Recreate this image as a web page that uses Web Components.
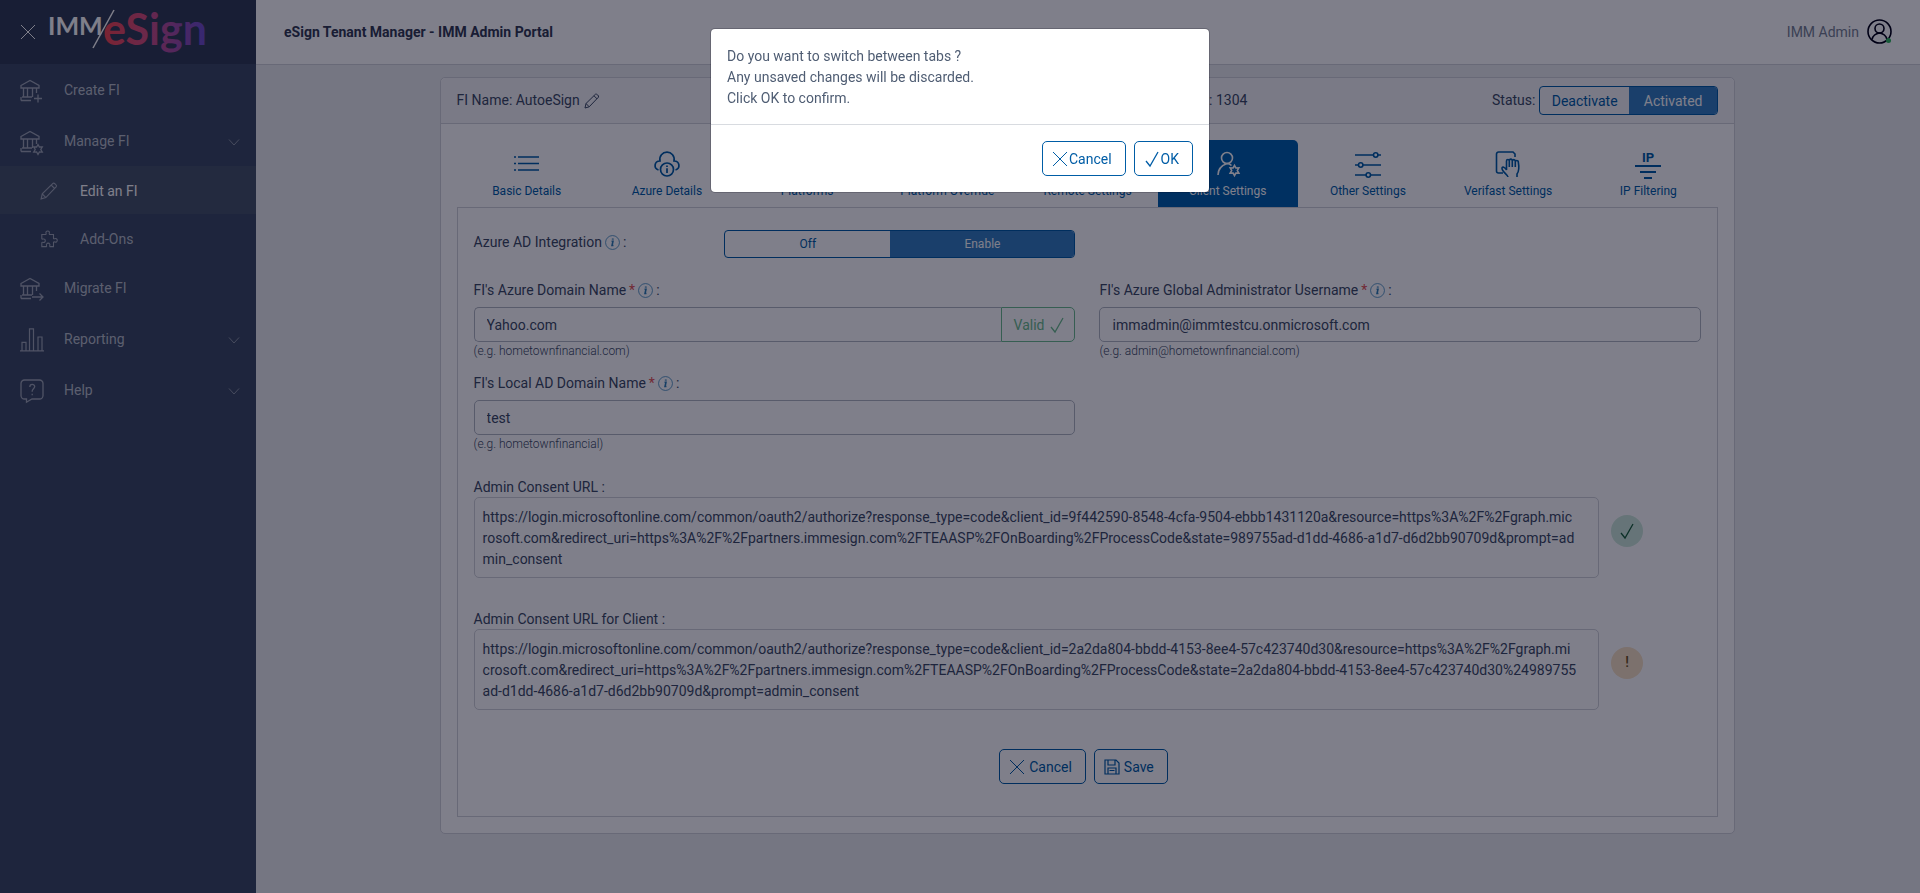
<!DOCTYPE html>
<html lang="en">
<head>
<meta charset="utf-8">
<title>eSign Tenant Manager - IMM Admin Portal</title>
<style>
    body {
        margin: 0;
        background: #ebedef;
        color: #3c4b64;
        font: 14px/21px Roboto, "Liberation Sans", sans-serif;
        --primary: #005da6;
        --primary-soft: #347ec1;
        --success: #6cbd8e;
        --line: #d0d2d8;
    }
</style>
</head>
<body>

<admin-app>
    <app-sidebar slot="sidebar">
        <nav-item icon="bank-plus">Create FI</nav-item>
        <nav-item icon="bank-gear" expandable>Manage FI</nav-item>
        <nav-item icon="pencil" sub active>Edit an FI</nav-item>
        <nav-item icon="puzzle" sub>Add-Ons</nav-item>
        <nav-item icon="bank-arrow">Migrate FI</nav-item>
        <nav-item icon="chart" expandable>Reporting</nav-item>
        <nav-item icon="help" expandable>Help</nav-item>
    </app-sidebar>
    <app-header slot="header" user="IMM Admin">eSign Tenant Manager - IMM Admin Portal</app-header>

    <fi-card name="AutoeSign" fi-id="1304">
        <tab-bar slot="tabs">
            <tab-item icon="list">Basic Details</tab-item>
            <tab-item icon="cloud-info">Azure Details</tab-item>
            <tab-item icon="list">Platforms</tab-item>
            <tab-item icon="list">Platform Override</tab-item>
            <tab-item icon="sliders">Remote Settings</tab-item>
            <tab-item icon="user-gear" active>Client Settings</tab-item>
            <tab-item icon="sliders">Other Settings</tab-item>
            <tab-item icon="hand">Verifast Settings</tab-item>
            <tab-item icon="ip">IP Filtering</tab-item>
        </tab-bar>
        <client-settings></client-settings>
    </fi-card>
</admin-app>

<confirm-dialog>
    Do you want to switch between tabs ?<br>
    Any unsaved changes will be discarded.<br>
    Click OK to confirm.
</confirm-dialog>

<script>
    const BANK = `<path d="M1 6.500 10 1.500l9 5v2.500H1zM3.500 9v9M7.500 9v9M12.500 9v9M16.500 9v5M2 18h10M1 21.500h10M1 18v3.500"/>`;
    const COG = `<path d="M19.500 14.500l1.400 2.500 2.900-.1-1.500 2.600 1.500 2.600-2.900-.1-1.400 2.500-1.400-2.500-2.900.1 1.500-2.600-1.500-2.600 2.900.1z"/>`;

    // name: [viewBox, stroke width, markup]
    const ICONS = {
        "close": ["0 0 16 16", 1, `<path d="M1 1l14 14M15 1L1 15"/>`],
        "check": ["0 0 16 16", 1.3, `<path d="M2 10l4 5L14 1"/>`],
        "chevron": ["0 0 12 12", 1, `<path d="M1 3.500l5 5.500 5-5.500"/>`],
        "info": ["0 0 16 16", .8, `<circle cx="8" cy="8" r="7.400"/><path stroke-width="1.700" d="M7 6.700h1.500l-1 4.500H9"/><path stroke-width="2" d="M8.300 3.700l-.1 1.300"/>`],
        "bank-plus": ["0 0 24 24", 1.3, BANK + `<path d="M18 15.500v8M14 19.500h8"/>`],
        "bank-gear": ["0 0 24 24", 1.3, BANK + `<g transform="translate(-1.500)">${COG}</g>`],
        "bank-arrow": ["0 0 24 24", 1.3, BANK + `<path d="M12 20h11M19.500 16.500L23 20l-3.500 3.500"/>`],
        "pencil": ["0 0 16 16", 1, `<path d="M1 15l1-4.500L11.500 1.200c.8-.8 3.900 1.700 3 2.900L5.200 13.800zM10 2.800l3.200 3.200M2 10.500l3.200 3.300"/>`],
        "puzzle": ["0 0 20 20", 1.2, `<path d="M2 5h4.500c1-.8-.5-1.800.3-3 .8-1.200 2.800-1.200 3.500 0 .7 1.200-.8 2.200.3 3H15v4.500c.9 1 1.900-.6 3.200.2 1.300.8 1.300 2.800 0 3.600-1.300.7-2.300-.8-3.200.2V18.500h-4c-.9-.9.6-1.900-.2-3-.8-1.200-2.700-1.200-3.500 0-.8 1.100.7 2.100-.2 3H2V14c.9-1 1.900.4 3-.4 1.200-.8 1.200-2.600 0-3.400-1.100-.8-2.100.6-3-.4z"/>`],
        "chart": ["0 0 24 24", 1.2, `<path d="M0 22.800h24M2 22.800v-8.500h4v8.500M9.500 22.800V.8h4v22M18 22.800V9h4v13.800"/>`],
        "help": ["0 0 24 24", 1.3, `<path d="M4.500 1h15A3.500 3.500 0 0 1 23 4.500v12a3.500 3.500 0 0 1-3.500 3.500H12l-5.500 3.200V20h-2A3.500 3.500 0 0 1 1 16.500v-12A3.500 3.500 0 0 1 4.500 1z"/><path d="M9.800 8c0-3.600 4.900-3.400 4.900-.4 0 2-2.500 2.200-2.500 4.400v.8M12.200 14.800v1.500"/>`],
        "list": ["0 0 26 26", 1.6, `<path d="M4 6H25M4 12.500H25M4 19H25M0 6h2M0 12.500h2M0 19h2"/>`],
        "cloud-info": ["0 0 26 26", 1.7, `<path d="M4.500 19C-.5 17.500 0 10 6 10 5 5 8.500 1.200 13 1.200S21 5 20 10c6 0 6.500 7.500 1.500 9"/><circle cx="13" cy="18.500" r="6.500"/><path d="M13 17.200V22M13 14.500v1.600"/>`],
        "user-gear": ["0 0 26 26", 1.6, `<circle cx="12" cy="7" r="5.500"/><path d="M3 24c0-6 3.500-9.500 9-11.500 2 0 3.500 1 4.500 2"/>` + COG],
        "sliders": ["0 0 26 26", 1.6, `<path d="M0 4h18.500M23 4h3M0 14h3.500M8 14h18M0 24h11M15.500 24H26"/><circle cx="20.700" cy="4" r="2.200"/><circle cx="5.700" cy="14" r="2.200"/><circle cx="13.300" cy="24" r="2.200"/>`],
        "hand": ["0 0 26 26", 1.6, `<path d="M8 22H3.500A2 2 0 0 1 1.500 20V3A2 2 0 0 1 3.500 1h14.500l2 2v3"/><path d="M13 26c0-2-6-5.500-6-8.500 0-2.500 3-1.500 4.500 1.500V10c0-2 2.800-2 2.800 0v6M14.300 10c0-2.500 3-2.500 3 0v6M17.300 10.300c0-2.300 3-2.300 3 0V16M20.300 11c0-2 3-2 3 0 .9 5 1 9-1.300 12v3"/>`],
        "ip": ["0 0 26 26", 1.8, `<text x="13" y="10.500" text-anchor="middle" font-size="13" font-weight="700" fill="currentColor" stroke="none">IP</text><path d="M0 15h26M5 21h16M9 27h8"/>`],
        "save": ["0 0 16 16", 1.2, `<path d="M1 1h11l3 3v11H1zM4 1v5h7V1M4 15V9h8v6M5.500 11.500h5"/>`],
        "avatar": ["0 0 26 26", 1.6, `<circle cx="12.500" cy="12.500" r="11.500"/><circle cx="12.500" cy="9.500" r="4.500"/><path d="M5 20.500c1-4 3.500-6 7.500-6.500 4 .5 6.500 2.500 7.500 6.500"/><circle cx="21.500" cy="21.500" r="2.500" fill="#2eb85c" stroke="none"/>`]
    };

    class BaseElement extends HTMLElement {
        constructor() {
            super();
            this.attachShadow({ mode: "open" });
        }

        connectedCallback() {
            this.shadowRoot.innerHTML = `<style>${this.styles()}</style>${this.render()}`;
        }

        attr(name) {
            return this.getAttribute(name) || "";
        }
    }

    customElements.define("ui-icon", class extends BaseElement {
        styles() {
            return `
                :host { display: inline-block; width: 16px; height: 16px; flex: none; }
                svg { display: block; width: 100%; height: 100%; overflow: visible; }
            `;
        }
        render() {
            const [box, width, body] = ICONS[this.attr("name")];
            return `<svg viewBox="${box}" fill="none" stroke="currentColor" stroke-width="${width}" aria-hidden="true">${body}</svg>`;
        }
    });

    customElements.define("ui-button", class extends BaseElement {
        styles() {
            return `
                :host { display: inline-block; }
                button {
                    display: flex;
                    align-items: center;
                    gap: var(--button-gap, 4px);
                    height: 35px;
                    padding: 1px 13px 0 9px;
                    border: 1px solid var(--primary);
                    border-radius: 5px;
                    background: none;
                    color: var(--primary);
                    font: inherit;
                }
            `;
        }
        render() {
            return `<button type="button"><ui-icon name="${this.attr("icon")}"></ui-icon><slot></slot></button>`;
        }
    });

    // two-state switch, the second option is the selected one
    customElements.define("toggle-group", class extends BaseElement {
        styles() {
            return `
                :host { display: grid; height: 28px; }
                div {
                    display: grid;
                    grid-template-columns: var(--toggle-columns, 1fr 1fr);
                    border: 1px solid var(--primary);
                    border-radius: 4px;
                    overflow: hidden;
                }
                button {
                    border: 0;
                    padding: 1px 0 0;
                    background: none;
                    color: var(--primary);
                    font: inherit;
                }
                button[aria-pressed=true] { background: var(--primary-soft); color: #fff; }
            `;
        }
        render() {
            return `<div role="group" aria-label="${this.attr("label")}">
                <button type="button" aria-pressed="false">${this.attr("off")}</button>
                <button type="button" aria-pressed="true">${this.attr("on")}</button>
            </div>`;
        }
    });

    customElements.define("admin-app", class extends BaseElement {
        styles() {
            return `
                :host { display: grid; grid-template-columns: 256px 1fr; min-height: 100vh; }
                main {
                    display: grid;
                    grid-template-columns: 1fr 10fr 1fr;
                    padding: 12px 55px 12px 54px;
                }
                main ::slotted(*) { grid-column: 2; }
            `;
        }
        render() {
            return `<slot name="sidebar"></slot>
                <div><slot name="header"></slot><main><slot></slot></main></div>`;
        }
    });

    customElements.define("app-sidebar", class extends BaseElement {
        styles() {
            return `
                :host { display: block; background: #3c4b64; color: #fff; }
                header {
                    display: flex;
                    align-items: center;
                    gap: 14px;
                    height: 64px;
                    padding-left: 20px;
                    background: #303c54;
                }
                button { display: flex; padding: 0; border: 0; background: none; color: inherit; }
                svg { overflow: visible; }
            `;
        }
        render() {
            return `<header>
                <button type="button" aria-label="Close menu"><ui-icon name="close"></ui-icon></button>
                <svg width="160" height="64" role="img" aria-label="IMM/eSign">
                    <defs>
                        <linearGradient id="brand" gradientUnits="userSpaceOnUse" x1="54" y1="0" x2="156" y2="0">
                            <stop offset="0" stop-color="#f5474f"/>
                            <stop offset=".4" stop-color="#d6507e"/>
                            <stop offset=".7" stop-color="#a34ea6"/>
                            <stop offset="1" stop-color="#6a50d0"/>
                        </linearGradient>
                    </defs>
                    <text x="-2" y="35" font-family="Lato" font-weight="700" font-size="25" fill="#fff">IMM</text>
                    <path d="M64 10L43 48" stroke="#fff" stroke-width="1.500"/>
                    <text x="53" y="45" font-family="Lato" font-weight="700" font-size="43" fill="url(#brand)">eSign</text>
                </svg>
            </header>
            <nav><slot></slot></nav>`;
        }
    });

    customElements.define("nav-item", class extends BaseElement {
        styles() {
            return `
                :host { display: block; }
                a {
                    display: flex;
                    align-items: center;
                    box-sizing: border-box;
                    height: 51px;
                    padding: 2px 16px 0 20px;
                    color: #b9bec8;
                    text-decoration: none;
                }
                .icon { width: 24px; height: 24px; margin-right: 20px; color: #a0a7b5; }
                .chevron { width: 12px; height: 12px; margin-left: auto; color: #8f97a6; }
                :host([sub]) a { height: 48px; padding-left: 40px; }
                :host([sub]) .icon { width: 18px; height: 18px; margin-right: 22px; }
                :host([active]) a { background: #465469; color: #fff; }
            `;
        }
        render() {
            const chevron = this.hasAttribute("expandable") ? `<ui-icon class="chevron" name="chevron"></ui-icon>` : "";
            return `<a href="#"><ui-icon class="icon" name="${this.attr("icon")}"></ui-icon><slot></slot>${chevron}</a>`;
        }
    });

    customElements.define("app-header", class extends BaseElement {
        styles() {
            return `
                :host {
                    display: flex;
                    align-items: center;
                    justify-content: space-between;
                    height: 64px;
                    padding: 0 27px 0 28px;
                    border-bottom: 1px solid var(--line);
                    background: #fff;
                }
                h1 { margin: 0; font-size: 14px; color: #333a52; }
                div { display: flex; align-items: center; gap: 8px; color: #768192; }
                ui-icon { width: 26px; height: 26px; color: #000015; }
            `;
        }
        render() {
            return `<h1><slot></slot></h1><div>${this.attr("user")}<ui-icon name="avatar"></ui-icon></div>`;
        }
    });

    customElements.define("fi-card", class extends BaseElement {
        styles() {
            return `
                :host {
                    display: block;
                    border: 1px solid var(--line);
                    border-radius: 5px;
                    background: #fff;
                }
                header {
                    display: grid;
                    grid-template-columns: 7fr 5fr;
                    align-items: center;
                    padding: 8px 16px;
                    border-bottom: 1px solid var(--line);
                    background: #f5f5f7;
                    border-radius: 5px 5px 0 0;
                }
                header div { display: flex; align-items: center; gap: 4px; }
                header .meta { justify-content: space-between; }
                toggle-group { --toggle-columns: 1fr 1fr; width: 179px; height: 29px; }
                .body { padding: 16px; }
                .panel { border: 1px solid var(--line); padding: 22px 16px 32px; }
            `;
        }
        render() {
            return `<header>
                <div>FI Name: ${this.attr("name")}<ui-icon name="pencil"></ui-icon></div>
                <div class="meta">
                    <span>ID : ${this.attr("fi-id")}</span>
                    <div>Status:<toggle-group label="Status" off="Deactivate" on="Activated"></toggle-group></div>
                </div>
            </header>
            <div class="body">
                <slot name="tabs"></slot>
                <div class="panel"><slot></slot></div>
            </div>`;
        }
    });

    customElements.define("tab-bar", class extends BaseElement {
        styles() {
            return `
                :host { display: block; }
                div { display: grid; grid-auto-flow: column; grid-auto-columns: 1fr; }
            `;
        }
        render() {
            return `<div role="tablist"><slot></slot></div>`;
        }
    });

    customElements.define("tab-item", class extends BaseElement {
        styles() {
            return `
                :host { display: block; }
                button {
                    display: flex;
                    flex-direction: column;
                    align-items: center;
                    justify-content: space-between;
                    width: 100%;
                    height: 67px;
                    padding: 11px 0 7px;
                    border: 0;
                    border-radius: 5px 5px 0 0;
                    background: none;
                    color: var(--primary);
                    font: inherit;
                    font-size: 12px;
                    line-height: 18px;
                }
                ui-icon { width: 26px; height: 26px; }
                :host([active]) button { background: #0060ad; color: #fff; }
            `;
        }
        render() {
            return `<button type="button" role="tab" aria-selected="${this.hasAttribute("active")}">
                <ui-icon name="${this.attr("icon")}"></ui-icon><slot></slot></button>`;
        }
    });

    customElements.define("form-field", class extends BaseElement {
        styles() {
            return `
                :host { display: block; }
                label { display: flex; align-items: center; gap: 3px; margin-bottom: 6px; }
                b { color: #e55353; font-weight: 400; }
                ui-icon { color: #2f7fb5; width: 15px; height: 15px; }
                .group { display: flex; height: 35px; }
                input {
                    flex: 1;
                    min-width: 0;
                    padding: 1px 12px 0;
                    border: 1px solid #b1b7c1;
                    border-radius: 5px;
                    background: #fff;
                    color: inherit;
                    font: inherit;
                }
                .valid input { border-right: 0; border-radius: 5px 0 0 5px; }
                .addon {
                    display: flex;
                    align-items: center;
                    gap: 5px;
                    padding: 1px 9px 0 12px;
                    border: 1px solid var(--success);
                    border-radius: 0 5px 5px 0;
                    color: var(--success);
                }
                .addon ui-icon { width: 16px; height: 16px; color: inherit; }
                small { display: block; font-size: 12px; line-height: 18px; font-weight: 300; }
            `;
        }
        render() {
            const valid = this.hasAttribute("valid");
            return `<label for="field">${this.attr("label")} <b>*</b><ui-icon name="info"></ui-icon> :</label>
                <div class="group ${valid ? "valid" : ""}">
                    <input id="field" type="text" value="${this.attr("value")}">
                    ${valid ? `<span class="addon">Valid<ui-icon name="check"></ui-icon></span>` : ""}
                </div>
                <small>${this.attr("hint")}</small>`;
        }
    });

    customElements.define("consent-url", class extends BaseElement {
        styles() {
            return `
                :host { display: grid; grid-template-columns: 11fr 1fr; align-items: center; }
                h2 { grid-column: 1 / 3; margin: 0; font: inherit; line-height: 20px; }
                .url {
                    padding: 9px 8px 7px;
                    border: 1px solid var(--line);
                    border-radius: 5px;
                    overflow-wrap: anywhere;
                }
                .status {
                    display: grid;
                    place-items: center;
                    width: 32px;
                    height: 32px;
                    margin: 0 0 14px 12px;
                    border-radius: 50%;
                    background: #f8e2c4;
                    color: #6b5120;
                    font-weight: 500;
                }
                .status.ok { background: #cde9da; color: #18603a; }
            `;
        }
        render() {
            const ok = this.attr("status") === "ok";
            return `<h2>${this.attr("label")} :</h2>
                <div class="url"><slot></slot></div>
                <span class="status ${ok ? "ok" : ""}">${ok ? `<ui-icon name="check"></ui-icon>` : "!"}</span>`;
        }
    });

    customElements.define("client-settings", class extends BaseElement {
        styles() {
            return `
                :host { display: block; }
                .fields { display: grid; grid-template-columns: 1fr 1fr; gap: 13px 24px; margin-bottom: 24px; }
                .switch {
                    grid-column: 1;
                    display: grid;
                    grid-template-columns: 5fr 7fr;
                    margin-bottom: 9px;
                }
                .switch span { display: flex; align-items: center; gap: 3px; height: 24px; }
                .switch ui-icon { width: 15px; height: 15px; color: #2f7fb5; }
                toggle-group { --toggle-columns: 165px 1fr; font-size: 12px; }
                .left { grid-column: 1; }
                consent-url + consent-url { margin-top: 31px; }
                footer { display: flex; justify-content: center; gap: 8px; margin-top: 39px; padding-right: 8px; }
            `;
        }
        render() {
            return `<div class="fields">
                <div class="switch">
                    <span>Azure AD Integration<ui-icon name="info"></ui-icon> :</span>
                    <toggle-group label="Azure AD Integration" off="Off" on="Enable"></toggle-group>
                </div>
                <form-field class="left" valid label="FI's Azure Domain Name" value="Yahoo.com" hint="(e.g. hometownfinancial.com)"></form-field>
                <form-field label="FI's Azure Global Administrator Username" value="immadmin@immtestcu.onmicrosoft.com" hint="(e.g. admin@hometownfinancial.com)"></form-field>
                <form-field class="left" label="FI's Local AD Domain Name" value="test" hint="(e.g. hometownfinancial)"></form-field>
            </div>
            <consent-url label="Admin Consent URL" status="ok">https://login.microsoftonline.com/common/oauth2/authorize?response_type=code&amp;client_id=9f442590-8548-4cfa-9504-ebbb1431120a&amp;resource=https%3A%2F%2Fgraph.mic<wbr>rosoft.com&amp;redirect_uri=https%3A%2F%2Fpartners.immesign.com%2FTEAASP%2FOnBoarding%2FProcessCode&amp;state=989755ad-d1dd-4686-a1d7-d6d2bb90709d&amp;prompt=ad<wbr>min_consent</consent-url>
            <consent-url label="Admin Consent URL for Client" status="pending">https://login.microsoftonline.com/common/oauth2/authorize?response_type=code&amp;client_id=2a2da804-bbdd-4153-8ee4-57c423740d30&amp;resource=https%3A%2F%2Fgraph.mi<wbr>crosoft.com&amp;redirect_uri=https%3A%2F%2Fpartners.immesign.com%2FTEAASP%2FOnBoarding%2FProcessCode&amp;state=2a2da804-bbdd-4153-8ee4-57c423740d30%24989755<wbr>ad-d1dd-4686-a1d7-d6d2bb90709d&amp;prompt=admin_consent</consent-url>
            <footer>
                <ui-button icon="close">Cancel</ui-button>
                <ui-button icon="save">Save</ui-button>
            </footer>`;
        }
    });

    customElements.define("confirm-dialog", class extends BaseElement {
        styles() {
            return `
                :host {
                    position: fixed;
                    inset: 0;
                    display: flex;
                    align-items: flex-start;
                    justify-content: center;
                    background: rgba(0, 0, 21, .5);
                }
                section {
                    width: 500px;
                    box-sizing: border-box;
                    margin-top: 28px;
                    border: 1px solid rgba(0, 0, 21, .2);
                    border-radius: 5px;
                    background: #fff;
                    background-clip: padding-box;
                    color: #4f5d73;
                }
                p { margin: 0; padding: 17px 16px 15px; }
                footer {
                    display: flex;
                    justify-content: flex-end;
                    gap: 8px;
                    padding: 16px;
                    border-top: 1px solid #d8dbe0;
                    --button-gap: 1px;
                }
            `;
        }
        render() {
            return `<section role="dialog" aria-modal="true" aria-label="Confirm">
                <p><slot></slot></p>
                <footer>
                    <ui-button icon="close">Cancel</ui-button>
                    <ui-button icon="check">OK</ui-button>
                </footer>
            </section>`;
        }
    });
</script>
</body>
</html>
